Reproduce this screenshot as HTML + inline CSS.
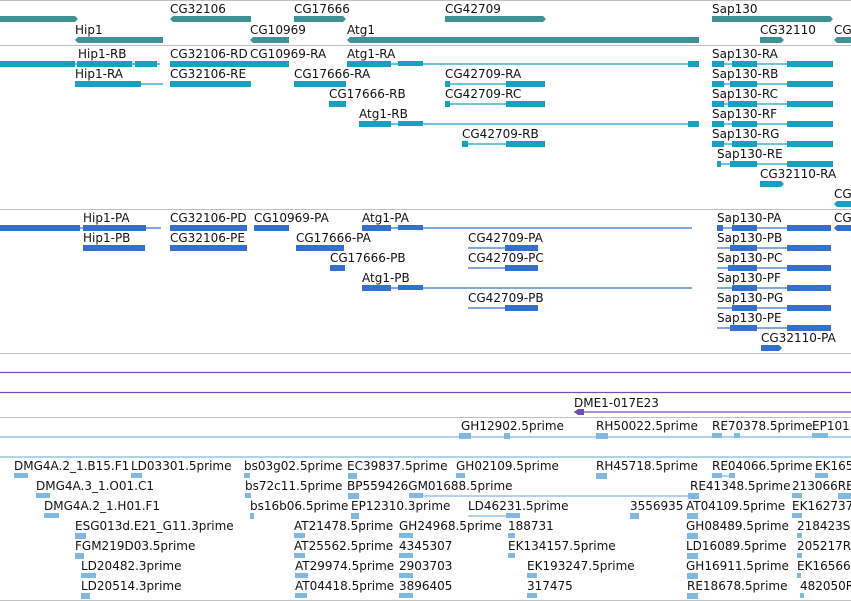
<!DOCTYPE html>
<html><head><meta charset="utf-8"><style>
body{margin:0;background:#fff;}
svg{display:block;font-family:"DejaVu Sans","Liberation Sans",sans-serif;font-size:12px;}
text{fill:#111;transform:translateY(1px);}
.g{fill:#3f9196}.t{fill:#17a0c0}.p{fill:#3370cc}.e{fill:#80b8e0}.v{fill:#7050b0}
.tl{stroke:#17a0c0;stroke-width:1.3}.pl{stroke:#3370cc;stroke-width:1.3}.el{stroke:#80b8e0;stroke-width:1.3}
</style></head><body>
<svg width="851" height="601" viewBox="0 0 851 601">
<g stroke="#c0c0c0" stroke-width="1">
<line x1="0" y1="0.5" x2="851" y2="0.5"/><line x1="0" y1="45.5" x2="851" y2="45.5"/>
<line x1="0" y1="209.5" x2="851" y2="209.5"/><line x1="0" y1="353.5" x2="851" y2="353.5"/>
<line x1="0" y1="417.5" x2="851" y2="417.5"/><line x1="0" y1="600.5" x2="851" y2="600.5"/>
</g>
<g stroke="#7050b0" stroke-width="1.2"><line x1="0" y1="372.5" x2="851" y2="372.5"/><line x1="0" y1="392.5" x2="851" y2="392.5"/></g>
<g stroke="#80b8e0" stroke-width="1.2"><line x1="0" y1="437" x2="851" y2="437"/><line x1="0" y1="457" x2="851" y2="457"/></g>

<text x="170" y="12">CG32106</text><text x="294" y="12">CG17666</text><text x="445" y="12">CG42709</text><text x="712" y="12">Sap130</text>
<polygon class="g" points="0,16 75,16 78,19 75,22 0,22"/>
<polygon class="g" points="173,16 251,16 251,22 173,22 170,19"/>
<polygon class="g" points="294,16 343,16 346,19 343,22 294,22"/>
<polygon class="g" points="445,16 543,16 546,19 543,22 445,22"/>
<polygon class="g" points="712,16 830,16 833,19 830,22 712,22"/>
<text x="75" y="33">Hip1</text><text x="250" y="33">CG10969</text><text x="347" y="33">Atg1</text><text x="760" y="33">CG32110</text><text x="834" y="33">CG</text>
<polygon class="g" points="78,37 163,37 163,43 78,43 75,40"/>
<polygon class="g" points="253,37 289,37 289,43 253,43 250,40"/>
<polygon class="g" points="350,37 699,37 699,43 350,43 347,40"/>
<polygon class="g" points="760,37 781,37 784,40 781,43 760,43"/>
<polygon class="g" points="837,37 851,37 851,43 837,43 834,40"/>

<text x="78" y="57">Hip1-RB</text><text x="170" y="57">CG32106-RD</text><text x="250" y="57">CG10969-RA</text><text x="347" y="57">Atg1-RA</text><text x="712" y="57">Sap130-RA</text>
<line class="tl" x1="0" y1="64" x2="160" y2="64"/>
<rect class="t" x="0" y="61" width="75" height="6"/><rect class="t" x="77" y="61" width="55" height="6"/><rect class="t" x="135" y="61" width="22" height="6"/>
<rect class="t" x="170" y="61" width="80" height="6"/><rect class="t" x="250" y="61" width="39" height="6"/>
<line class="tl" x1="347" y1="64" x2="699" y2="64"/><rect class="t" x="347" y="61" width="44" height="6"/><rect class="t" x="398" y="61" width="25" height="5"/><rect class="t" x="688" y="61" width="11" height="6"/>
<line class="tl" x1="712" y1="64" x2="833" y2="64"/><rect class="t" x="712" y="61" width="12" height="6"/><rect class="t" x="732" y="61" width="25" height="6"/><rect class="t" x="787" y="61" width="46" height="6"/>

<text x="75" y="77">Hip1-RA</text><text x="170" y="77">CG32106-RE</text><text x="294" y="77">CG17666-RA</text><text x="445" y="77">CG42709-RA</text><text x="712" y="77">Sap130-RB</text>
<line class="tl" x1="75" y1="84" x2="163" y2="84"/><rect class="t" x="75" y="81" width="66" height="6"/>
<rect class="t" x="170" y="81" width="81" height="6"/>
<rect class="t" x="294" y="81" width="52" height="6"/>
<line class="tl" x1="445" y1="84" x2="545" y2="84"/><rect class="t" x="445" y="81" width="5" height="6"/><rect class="t" x="506" y="81" width="39" height="6"/>
<line class="tl" x1="712" y1="84" x2="833" y2="84"/><rect class="t" x="712" y="81" width="12" height="6"/><rect class="t" x="730" y="81" width="27" height="6"/><rect class="t" x="787" y="81" width="46" height="6"/>

<text x="329" y="97">CG17666-RB</text><text x="445" y="97">CG42709-RC</text><text x="712" y="97">Sap130-RC</text>
<rect class="t" x="329" y="101" width="17" height="6"/>
<line class="tl" x1="445" y1="104" x2="545" y2="104"/><rect class="t" x="445" y="101" width="5" height="6"/><rect class="t" x="506" y="101" width="39" height="6"/>
<line class="tl" x1="712" y1="104" x2="833" y2="104"/><rect class="t" x="712" y="101" width="12" height="6"/><rect class="t" x="728" y="101" width="29" height="6"/><rect class="t" x="787" y="101" width="46" height="6"/>

<text x="359" y="117">Atg1-RB</text><text x="712" y="117">Sap130-RF</text>
<line class="tl" x1="359" y1="124" x2="699" y2="124"/><rect class="t" x="359" y="121" width="32" height="6"/><rect class="t" x="398" y="121" width="25" height="5"/><rect class="t" x="688" y="121" width="11" height="6"/>
<line class="tl" x1="712" y1="124" x2="833" y2="124"/><rect class="t" x="712" y="121" width="12" height="6"/><rect class="t" x="732" y="121" width="25" height="6"/><rect class="t" x="787" y="121" width="46" height="6"/>

<text x="462" y="137">CG42709-RB</text><text x="712" y="137">Sap130-RG</text>
<line class="tl" x1="462" y1="144" x2="545" y2="144"/><rect class="t" x="462" y="141" width="6" height="6"/><rect class="t" x="506" y="141" width="39" height="6"/>
<line class="tl" x1="712" y1="144" x2="833" y2="144"/><rect class="t" x="712" y="141" width="12" height="6"/><rect class="t" x="732" y="141" width="25" height="6"/><rect class="t" x="787" y="141" width="46" height="6"/>

<text x="717" y="157">Sap130-RE</text>
<line class="tl" x1="717" y1="164" x2="833" y2="164"/><rect class="t" x="717" y="161" width="4" height="6"/><rect class="t" x="730" y="161" width="27" height="6"/><rect class="t" x="787" y="161" width="46" height="6"/>
<text x="760" y="177">CG32110-RA</text>
<polygon class="t" points="760,181 781,181 784,184 781,187 760,187"/>
<text x="834" y="197">CG</text>
<polygon class="t" points="837,201 851,201 851,207 837,207 834,204"/>

<text x="83" y="221">Hip1-PA</text><text x="170" y="221">CG32106-PD</text><text x="254" y="221">CG10969-PA</text><text x="362" y="221">Atg1-PA</text><text x="717" y="221">Sap130-PA</text><text x="834" y="221">CG</text>
<line class="pl" x1="0" y1="228" x2="161" y2="228"/><rect class="p" x="0" y="225" width="80" height="6"/><rect class="p" x="83" y="225" width="63" height="6"/>
<rect class="p" x="170" y="225" width="77" height="6"/><rect class="p" x="254" y="225" width="35" height="6"/>
<line class="pl" x1="362" y1="228" x2="692" y2="228"/><rect class="p" x="362" y="225" width="29" height="6"/><rect class="p" x="398" y="225" width="25" height="5"/>
<line class="pl" x1="717" y1="228" x2="831" y2="228"/><rect class="p" x="717" y="225" width="6" height="6"/><rect class="p" x="732" y="225" width="25" height="6"/><rect class="p" x="787" y="225" width="44" height="6"/>
<polygon class="p" points="837,225 851,225 851,231 837,231 834,228"/>

<text x="83" y="241">Hip1-PB</text><text x="170" y="241">CG32106-PE</text><text x="296" y="241">CG17666-PA</text><text x="468" y="241">CG42709-PA</text><text x="717" y="241">Sap130-PB</text>
<rect class="p" x="83" y="245" width="62" height="6"/><rect class="p" x="170" y="245" width="77" height="6"/><rect class="p" x="296" y="245" width="48" height="6"/>
<line class="pl" x1="468" y1="248" x2="538" y2="248"/><rect class="p" x="505" y="245" width="33" height="6"/>
<line class="pl" x1="717" y1="248" x2="831" y2="248"/><rect class="p" x="730" y="245" width="27" height="6"/><rect class="p" x="787" y="245" width="44" height="6"/>

<text x="330" y="261">CG17666-PB</text><text x="468" y="261">CG42709-PC</text><text x="717" y="261">Sap130-PC</text>
<rect class="p" x="330" y="265" width="15" height="6"/>
<line class="pl" x1="468" y1="268" x2="538" y2="268"/><rect class="p" x="505" y="265" width="33" height="6"/>
<line class="pl" x1="717" y1="268" x2="831" y2="268"/><rect class="p" x="728" y="265" width="29" height="6"/><rect class="p" x="787" y="265" width="44" height="6"/>

<text x="362" y="281">Atg1-PB</text><text x="717" y="281">Sap130-PF</text>
<line class="pl" x1="362" y1="288" x2="692" y2="288"/><rect class="p" x="362" y="285" width="29" height="6"/><rect class="p" x="398" y="285" width="25" height="5"/>
<line class="pl" x1="717" y1="288" x2="831" y2="288"/><rect class="p" x="732" y="285" width="25" height="6"/><rect class="p" x="787" y="285" width="44" height="6"/>

<text x="468" y="301">CG42709-PB</text><text x="717" y="301">Sap130-PG</text>
<line class="pl" x1="468" y1="308" x2="538" y2="308"/><rect class="p" x="505" y="305" width="33" height="6"/>
<line class="pl" x1="717" y1="308" x2="831" y2="308"/><rect class="p" x="732" y="305" width="25" height="6"/><rect class="p" x="787" y="305" width="44" height="6"/>
<text x="717" y="321">Sap130-PE</text>
<line class="pl" x1="717" y1="328" x2="831" y2="328"/><rect class="p" x="730" y="325" width="27" height="6"/><rect class="p" x="787" y="325" width="44" height="6"/>
<text x="761" y="341">CG32110-PA</text>
<polygon class="p" points="761,345 779,345 782,348 779,351 761,351"/>

<text x="574" y="406">DME1-017E23</text>
<line x1="574" y1="412" x2="851" y2="412" stroke="#7050b0" stroke-width="1.3"/>
<polygon class="v" points="578,409 584,409 584,415 578,415 574,412"/>

<g>
<text x="461" y="429">GH12902.5prime</text><text x="596" y="429">RH50022.5prime</text><text x="712" y="429">RE70378.5prime</text><text x="812" y="429">EP101</text>
<rect class="e" x="459" y="433" width="12" height="6"/><rect class="e" x="504" y="433" width="6" height="6"/>
<rect class="e" x="596" y="433" width="12" height="6"/><rect class="e" x="712" y="433" width="10" height="5"/><rect class="e" x="734" y="433" width="6" height="5"/><rect class="e" x="812" y="433" width="16" height="5"/>

<text x="14" y="469">DMG4A.2_1.B15.F1</text><text x="131" y="469">LD03301.5prime</text><text x="244" y="469">bs03g02.5prime</text><text x="347" y="469">EC39837.5prime</text><text x="456" y="469">GH02109.5prime</text><text x="596" y="469">RH45718.5prime</text><text x="712" y="469">RE04066.5prime</text><text x="815" y="469">EK165</text>
<rect class="e" x="14" y="473" width="14" height="5"/><rect class="e" x="131" y="473" width="11" height="5"/><rect class="e" x="244" y="473" width="6" height="5"/><rect class="e" x="348" y="473" width="9" height="6"/><rect class="e" x="456" y="473" width="9" height="5"/><rect class="e" x="596" y="473" width="11" height="6"/>
<line class="el" x1="712" y1="476" x2="735" y2="476"/><rect class="e" x="712" y="473" width="10" height="5"/><rect class="e" x="729" y="473" width="6" height="5"/><rect class="e" x="815" y="473" width="13" height="5"/>

<text x="36" y="489">DMG4A.3_1.O01.C1</text><text x="245" y="489">bs72c11.5prime</text><text x="347" y="489">BP559426GM01688.5prime</text><text x="690" y="489">RE41348.5prime</text><text x="792" y="489">213066RE</text>
<rect class="e" x="36" y="493" width="14" height="5"/><rect class="e" x="245" y="493" width="6" height="5"/><rect class="e" x="348" y="493" width="11" height="6"/>
<line class="el" x1="409" y1="496" x2="699" y2="496"/><rect class="e" x="409" y="493" width="14" height="5"/><rect class="e" x="688" y="493" width="11" height="6"/><rect class="e" x="792" y="493" width="10" height="5"/><rect class="e" x="838" y="493" width="13" height="6"/>

<text x="44" y="509">DMG4A.2_1.H01.F1</text><text x="250" y="509">bs16b06.5prime</text><text x="351" y="509">EP12310.3prime</text><text x="468" y="509">LD46231.5prime</text><text x="630" y="509">3556935</text><text x="686" y="509">AT04109.5prime</text><text x="792" y="509">EK162737</text>
<rect class="e" x="44" y="513" width="15" height="5"/><rect class="e" x="250" y="513" width="4" height="6"/><rect class="e" x="351" y="513" width="8" height="6"/>
<line class="el" x1="468" y1="516" x2="520" y2="516"/><rect class="e" x="506" y="513" width="14" height="5"/><rect class="e" x="630" y="513" width="9" height="6"/><rect class="e" x="687" y="513" width="11" height="6"/><rect class="e" x="792" y="513" width="10" height="5"/>

<text x="75" y="529">ESG013d.E21_G11.3prime</text><text x="294" y="529">AT21478.5prime</text><text x="399" y="529">GH24968.5prime</text><text x="508" y="529">188731</text><text x="686" y="529">GH08489.5prime</text><text x="797" y="529">218423SI</text>
<rect class="e" x="75" y="533" width="11" height="6"/><rect class="e" x="294" y="533" width="11" height="5"/><rect class="e" x="399" y="533" width="14" height="5"/><rect class="e" x="508" y="533" width="7" height="5"/><rect class="e" x="687" y="533" width="11" height="6"/><rect class="e" x="797" y="533" width="5" height="5"/>

<text x="75" y="549">FGM219D03.5prime</text><text x="294" y="549">AT25562.5prime</text><text x="399" y="549">4345307</text><text x="508" y="549">EK134157.5prime</text><text x="686" y="549">LD16089.5prime</text><text x="797" y="549">205217R</text>
<rect class="e" x="75" y="553" width="9" height="6"/><rect class="e" x="294" y="553" width="11" height="5"/><rect class="e" x="399" y="553" width="14" height="5"/><rect class="e" x="508" y="553" width="7" height="5"/><rect class="e" x="687" y="553" width="11" height="6"/><rect class="e" x="797" y="553" width="5" height="5"/>

<text x="81" y="569">LD20482.3prime</text><text x="295" y="569">AT29974.5prime</text><text x="399" y="569">2903703</text><text x="527" y="569">EK193247.5prime</text><text x="686" y="569">GH16911.5prime</text><text x="797" y="569">EK16566</text>
<rect class="e" x="81" y="573" width="15" height="5"/><rect class="e" x="295" y="573" width="13" height="5"/><rect class="e" x="399" y="573" width="14" height="5"/><rect class="e" x="527" y="573" width="10" height="5"/><rect class="e" x="687" y="573" width="11" height="6"/><rect class="e" x="797" y="573" width="4" height="5"/>

<text x="81" y="589">LD20514.3prime</text><text x="295" y="589">AT04418.5prime</text><text x="399" y="589">3896405</text><text x="527" y="589">317475</text><text x="687" y="589">RE18678.5prime</text><text x="800" y="589">482050R</text>
<rect class="e" x="81" y="593" width="9" height="6"/><rect class="e" x="295" y="593" width="12" height="5"/><rect class="e" x="399" y="593" width="14" height="5"/><rect class="e" x="527" y="593" width="10" height="5"/><rect class="e" x="687" y="593" width="11" height="6"/><rect class="e" x="800" y="593" width="4" height="5"/>
</g>
</svg>
</body></html>
